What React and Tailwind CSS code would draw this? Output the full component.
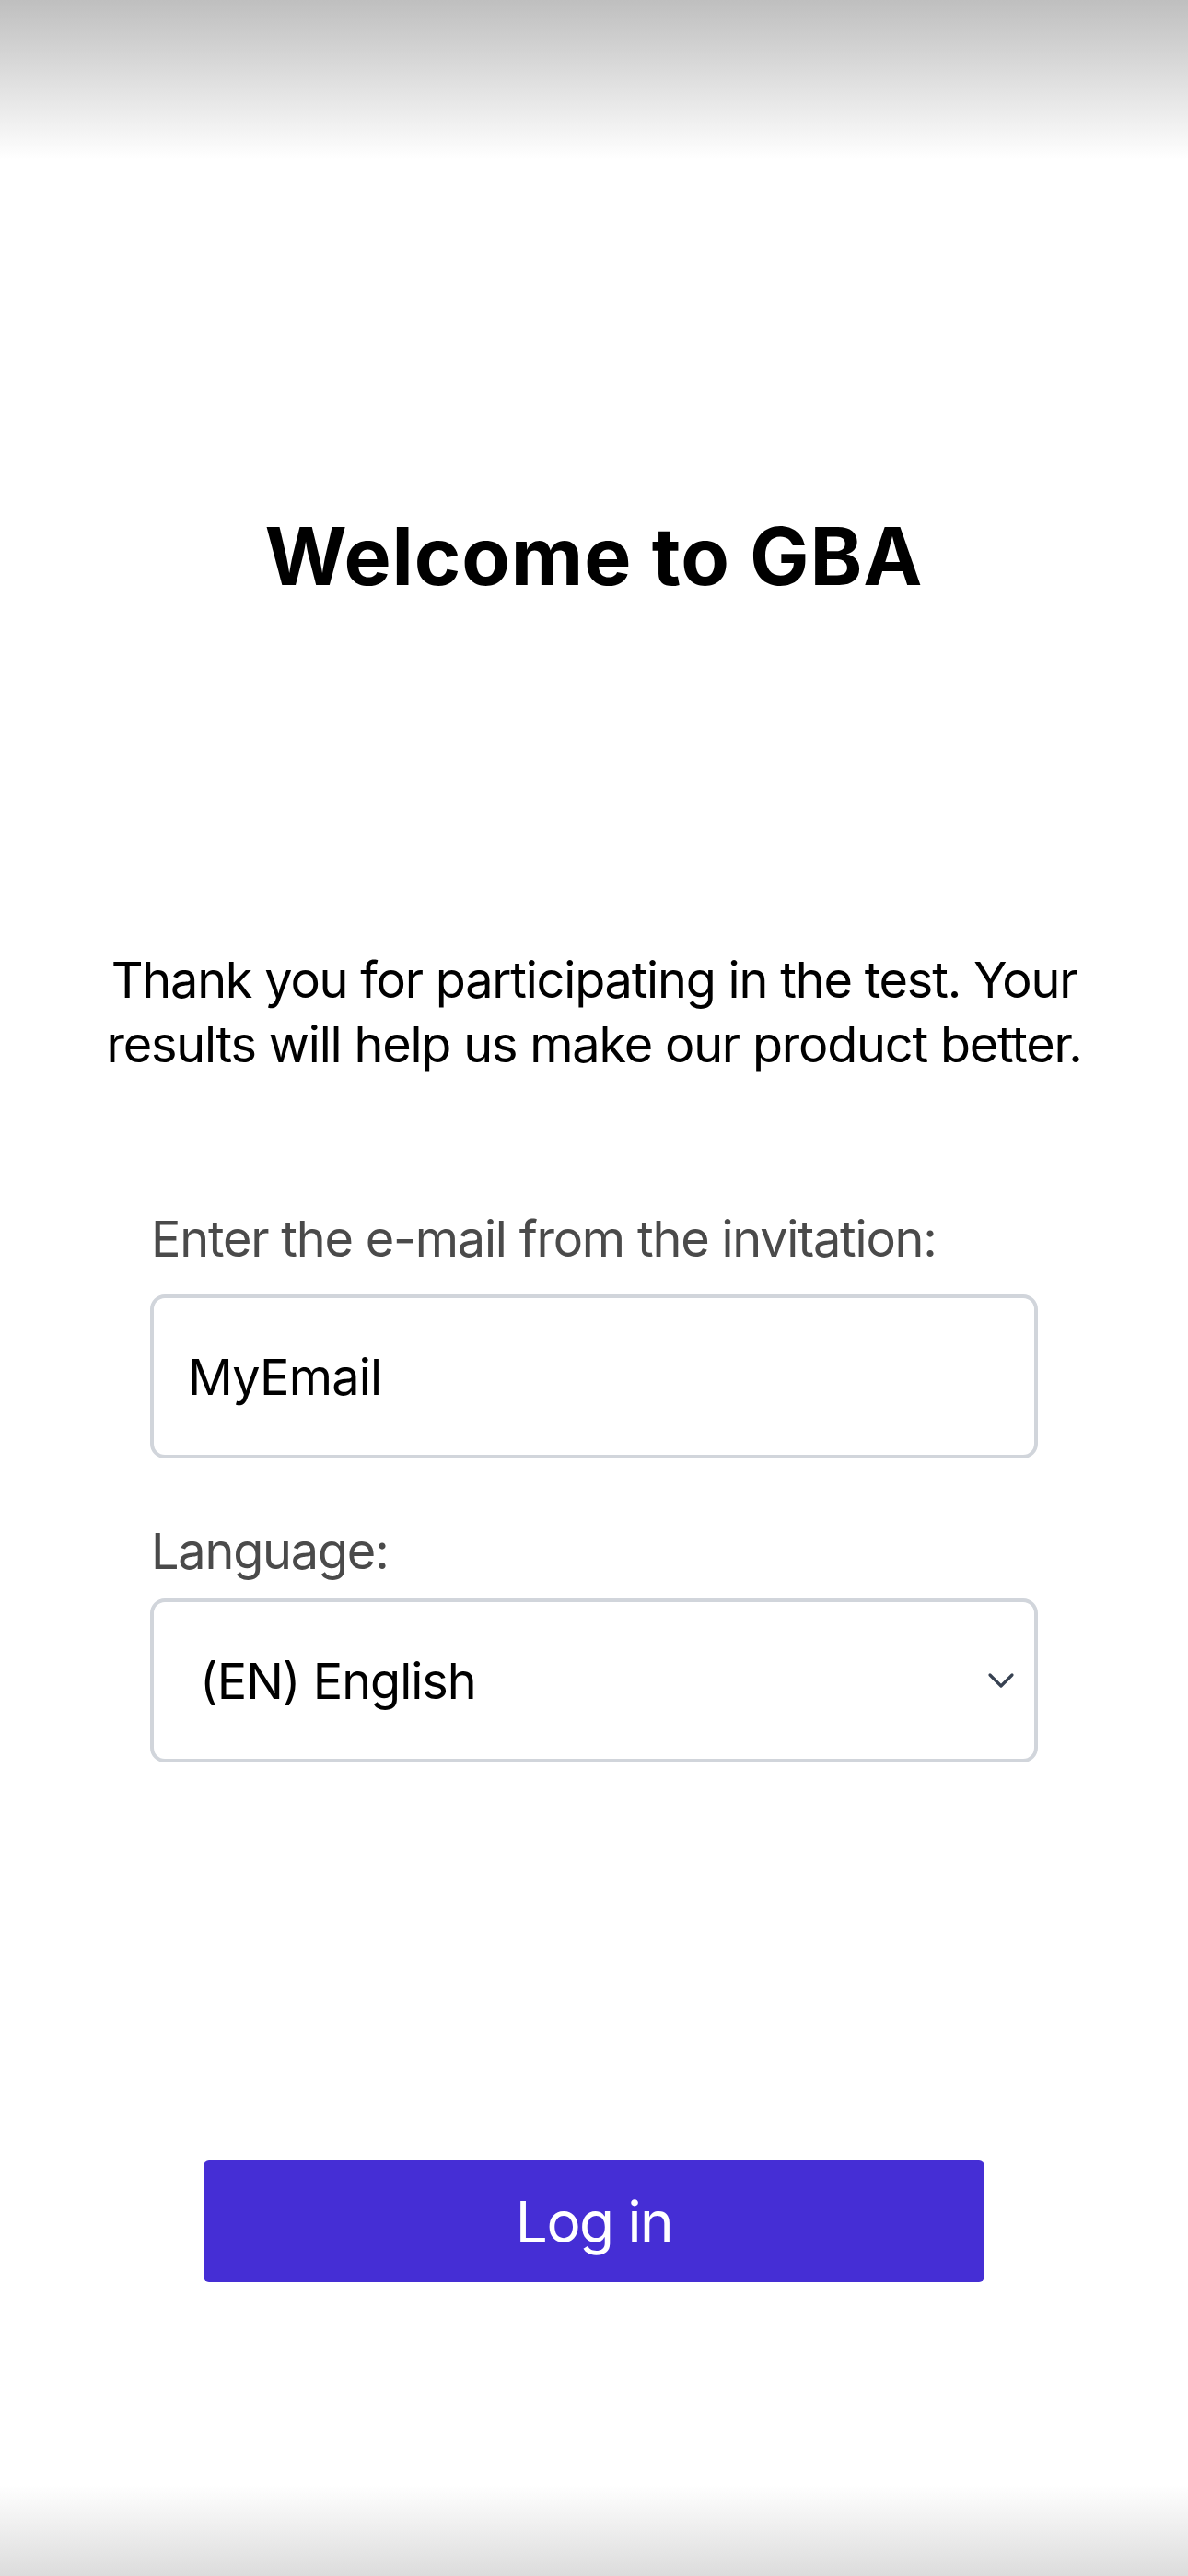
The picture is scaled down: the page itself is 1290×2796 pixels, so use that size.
import { useState } from 'react'

export default function App() {
  const [email, setEmail] = useState('MyEmail')
  const [lang, setLang] = useState('en')

  return (
    <div className="w-full h-[2796px] bg-white flex flex-col items-center font-['Inter',sans-serif] overflow-hidden">
      {/* top status shade */}
      <div className="w-full h-[173px] shrink-0 bg-gradient-to-b from-[#bfbfbf] to-white" />

      <h1 className="mt-[388px] text-[86px] leading-[86px] font-bold text-black tracking-[0.9px]">
        Welcome to GBA
      </h1>

      <p className="mt-[382px] w-[1120px] text-center text-[54px] leading-[70px] text-black tracking-[-1.2px]">
        Thank you for participating in the test. Your results will help us make our product better.
      </p>

      {/* Form */}
      <div className="mt-[144px] w-[964px] flex flex-col">
        <label className="pl-[1px] text-[54px] leading-[64px] text-[#4a4a4a] tracking-[-1.2px]">
          Enter the e-mail from the invitation:
        </label>
        <input
          type="text"
          value={email}
          onChange={(e) => setEmail(e.target.value)}
          className="mt-[28px] h-[178px] w-full rounded-2xl border-4 border-[#d1d5db] bg-white pl-[37px] pr-6 text-[54px] text-black outline-none tracking-[-0.8px]"
        />

        <label className="mt-[69px] pl-[1px] text-[54px] leading-[64px] text-[#4a4a4a] tracking-[-1.2px]">
          Language:
        </label>
        <div className="relative mt-[19px]">
          <select
            value={lang}
            onChange={(e) => setLang(e.target.value)}
            className="h-[178px] w-full appearance-none rounded-2xl border-4 border-[#d1d5db] bg-white pl-[50px] pr-20 text-[54px] text-black outline-none tracking-[-1px]"
          >
            <option value="en">(EN) English</option>
            <option value="de">(DE) Deutsch</option>
            <option value="fr">(FR) Français</option>
          </select>
          <svg
            className="pointer-events-none absolute right-[24px] top-1/2 -translate-y-1/2"
            width="32"
            height="20"
            viewBox="0 0 32 20"
            fill="none"
          >
            <path d="M4 4 L16 16 L28 4" stroke="#374151" strokeWidth="3.2" strokeLinecap="round" strokeLinejoin="round" />
          </svg>
        </div>
      </div>

      <button className="mt-[432px] h-[132px] w-[848px] rounded-md bg-[#452ed5] text-[62px] text-white tracking-[-1.5px]">
        Log in
      </button>

      <div className="mt-auto w-full h-[99px] shrink-0 bg-gradient-to-b from-white to-[#dcdcdc]" />
    </div>
  )
}
